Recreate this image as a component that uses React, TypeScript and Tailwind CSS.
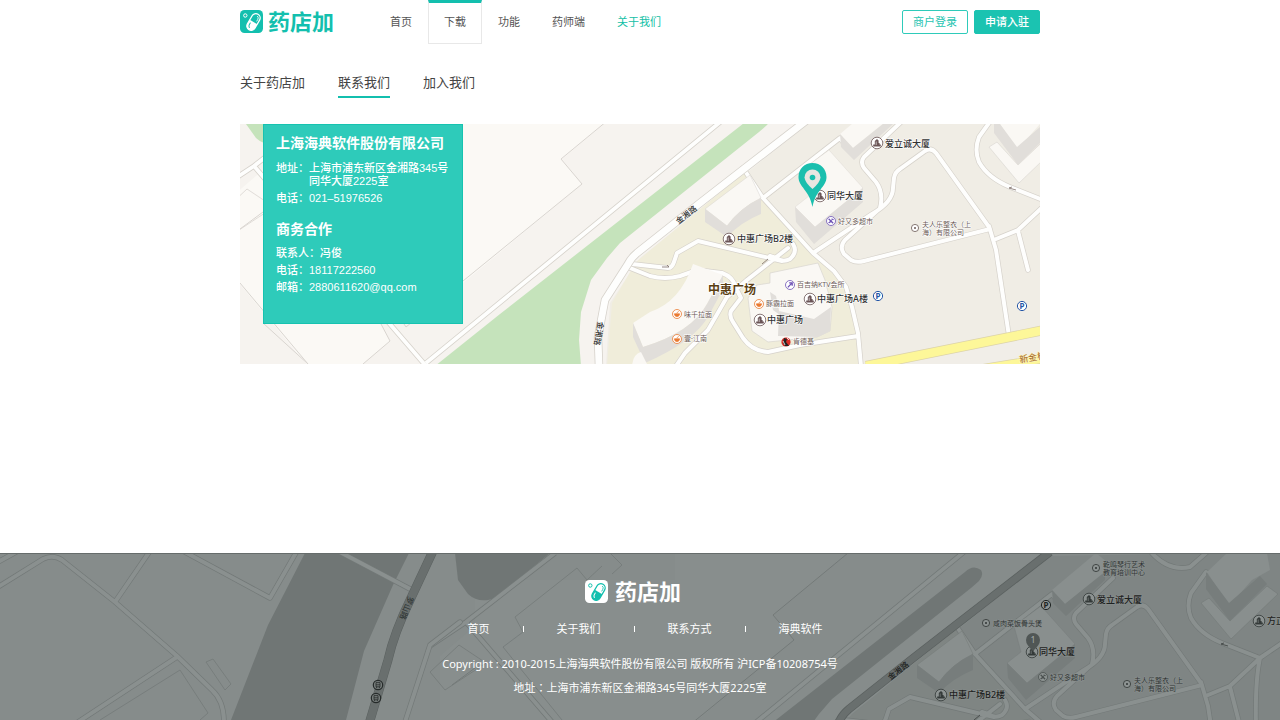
import React from "react";

type Palette = {
  base: string;
  parcel: string;
  line: string;
  green: string;
  district: string;
  plaza: string;
  road: string;
  edge: string;
  main: string;
  mainEdge: string;
  top: string;
  side: string;
  text: string;
  minor: string;
  halo: string;
  food: string;
  shop: string;
  tower: string;
  disc: string;
};

const light: Palette = {
  base: "#f6f3ef",
  parcel: "#fbf9f5",
  line: "#d9d5d0",
  green: "#c5e3bb",
  district: "#f0ede5",
  plaza: "#f0edda",
  road: "#fefefd",
  edge: "#d6d2cb",
  main: "#fefefd",
  mainEdge: "#d6d2cb",
  top: "#faf8f4",
  side: "#e1deda",
  text: "#333333",
  minor: "#6b5a55",
  halo: "#ffffff",
  food: "#ea7a30",
  shop: "#6d52b5",
  tower: "#6b5557",
  disc: "#ffffff",
};

const dark: Palette = {
  base: "#868c8b",
  parcel: "#888e8d",
  line: "#747a79",
  green: "#707675",
  district: "#7f8584",
  plaza: "#7f8583",
  road: "#8a908f",
  edge: "#737978",
  main: "#696f6e",
  mainEdge: "#5b6160",
  top: "#898f8e",
  side: "#777d7c",
  text: "#1e2221",
  minor: "#303534",
  halo: "#8a908f",
  food: "#4a504f",
  shop: "#4a504f",
  tower: "#343a39",
  disc: "#8d9392",
};

const mapFont = "'Noto Sans', 'Noto Sans CJK SC', sans-serif";

const minorRoads = [
  "M743 168L763 198L813 253L834 271L846 287L852 307L858 333L861 366",
  "M763 198L840 138L846 146",
  "M632 264L668 268Q672 268 674 262L677 253L698 241L782 261",
  "M630 268L650 276Q665 280 680 276L697 270L722 273Q733 277 735 286L741 298L731 311Q729 316 733 322L743 338Q752 351 768 352L800 345L858 336",
  "M676 366L685 353L708 330L727 297L747 280L788 248",
  "M793 244Q798 252 790 259Q783 263 776 258L770 256",
  "M813 253L872 214Q893 202 893 188L894 178Q895 172 900 169L925 151Q931 147 936 153L989 227",
  "M901 122L884 138L864 157Q860 162 864 168L876 182Q884 193 880 208",
  "M878 210L845 240Q839 247 844 254L851 260Q856 263 864 261L990 229",
  "M989 226L996 250L1009 336",
  "M996 239L1018 230L1048 202L1070 187",
  "M1018 231L1028 270",
  "M1048 202Q1043 225 1044 270",
  "M994 116L979 137Q974 150 979 162Q988 178 1010 187L1048 202",
  "M938 95Q956 116 978 111L994 97",
];

function Roads({ p, items, width }: { p: Palette; items: string[]; width: number }) {
  const d = items.join("");
  return (
    <g fill="none" strokeLinejoin="round" strokeLinecap="round">
      <path d={d} stroke={p.edge} strokeWidth={width + 1.4} />
      <path d={d} stroke={p.road} strokeWidth={width} />
    </g>
  );
}

function Terrain({ p }: { p: Palette }) {
  const mainRoad = "M599 366L598 337L605 300L628 264Q631 258 637 253L700 203L745 168L838 96";
  return (
    <g>
      <path d="M463 124L263 124L263 170L228 200L228 270L308 366L363 364L390 341L381 324L463 283L582 184L562 159L636 97L463 97Z" fill={p.parcel} />
      <path d="M636 97L561 159L582 184L463 281L406 327L400 318M240 283L308 364M263 323L308 364M363 364L390 341L381 324M240 229L263 212" fill="none" stroke={p.line} />
      <path d="M303 161L365 112L375 124L390 110M303 161L311 176L291 191L350 264M398 97L410 109L400 118M218 216L247 189L274 207L233 234Z" fill="none" stroke={p.line} strokeWidth="0.8" />
      <path d="M243 97L338 97L285 141Q268 149 256 138L246 124Z" fill={p.green} />
      <path d="M753 116Q761 108 769 114Q772 119 767 125L759 132L620 243L607 258L591 280L581 312L579 340L581 366L435 366L500 314Z" fill={p.green} />
      <path d="M838 100L640 258L632 270L610 303L606 366L1070 366L1070 96Z" fill={p.district} />
      <path d="M745 172L636 262L612 303L607 366L861 366L856 323L846 287L813 253L763 198Z" fill={p.plaza} />
      <g fill="none" strokeLinejoin="round">
        <path d="M752 96L426 363M218 190L254 166L343 97M254 166L426 366" stroke={p.edge} strokeWidth="5.4" />
        <path d="M752 96L426 363M218 190L254 166L343 97M254 166L426 366" stroke={p.road} strokeWidth="3.8" />
      </g>
      <Roads p={p} items={minorRoads} width={4} />
      <path d={mainRoad} fill="none" stroke={p.mainEdge} strokeWidth="8.4" />
      <path d={mainRoad} fill="none" stroke={p.main} strokeWidth="6.8" />

      <path d="M705 209L750 175L761 198Q740 208 727 226Z" fill={p.top} stroke={p.line} strokeWidth="0.5" />
      <path d="M705 209L727 226Q740 208 761 198V214Q741 222 727 237L705 222Z" fill={p.side} />
      <path d="M795 207L809 196L802 170L829 150L863 188L815 227Z" fill={p.top} stroke={p.line} strokeWidth="0.4" />
      <path d="M795 207L815 227L863 188V202L814 244L796 222Z" fill={p.side} />
      <path d="M840 134L884 97L900 110L853 148Z" fill={p.top} />
      <path d="M840 134L853 148L893 116V124L854 160L841 147Z" fill={p.side} />
      <path d="M995 116L1015 97L1055 97L1058 114L1040 124L1017 150Z" fill={p.top} />
      <path d="M994 116L1017 147L1048 120L1055 128L1018 165L994 133Z" fill={p.side} />
      <path d="M989 147L997 142L1018 165L1055 130L1066 138L1019 183Z" fill={p.top} stroke={p.line} strokeWidth="0.6" />
      <path d="M693 264L723 275L707 304Q692 332 643 347L633 323L650 312Q680 302 693 264Z" fill={p.top} />
      <path d="M633 323L643 347Q692 332 707 304L723 275V289L708 317Q693 342 645 363L633 337Z" fill={p.side} />
      <path d="M632 366Q633 354 641 352L648 366Z" fill={p.top} />
      <path d="M770 273L818 263L825 280L832 307L830 331L817 337L768 342L752 331L748 298L757 285L770 283Z" fill={p.top} stroke={p.line} strokeWidth="0.7" />
      <path d="M779 311L814 319L831 307L830 331L818 337L778 336ZM770 292L776 296L780 315L773 310Z" fill={p.side} />
    </g>
  );
}

function Tower({ x, y, p }: { x: number; y: number; p: Palette }) {
  return (
    <g transform={`translate(${x} ${y})`}>
      <circle r="5.8" fill={p.disc} stroke={p.tower} strokeWidth="0.8" />
      <path d="M-3.8 3.4V1.4H-2.2V-2L0 -4L1.6 -2.6V0H2.6V1.4H3.8V3.4Z" fill={p.tower} />
      <path d="M-0.8 -1.5V2" stroke={p.disc} strokeWidth="0.6" />
    </g>
  );
}

function Spot({ x, y, p, kind }: { x: number; y: number; p: Palette; kind: "food" | "shop" | "note" | "dot" }) {
  const color = kind === "food" ? p.food : kind === "dot" ? p.minor : p.shop;
  return (
    <g transform={`translate(${x} ${y})`}>
      <circle r={kind === "dot" ? 3.6 : 4.5} fill={p.disc} stroke={color} strokeWidth="0.8" />
      {kind === "food" && <path d="M-2.6 -0.2H2.6Q2.4 2.6 0 2.6Q-2.4 2.6 -2.6 -0.2ZM-0.4 -1L1.8 -2.6" fill={color} stroke={color} strokeWidth="0.7" />}
      {kind === "shop" && <path d="M-2.4 -2.2L2.2 2.2M-2.4 2L1 -0.6M0.4 -2L2.6 -1.4" fill="none" stroke={color} strokeWidth="1.2" />}
      {kind === "note" && <path d="M-2.2 2.4L1.4 -1.4M-0.8 -2.2H2.2V0.8" fill="none" stroke={color} strokeWidth="1.3" />}
      {kind === "dot" && <circle r="1" fill={color} />}
    </g>
  );
}

function Parking({ x, y, color, disc }: { x: number; y: number; color: string; disc: string }) {
  return (
    <g transform={`translate(${x} ${y})`}>
      <circle r="4.6" fill={disc} stroke={color} />
      <text y="2.8" textAnchor="middle" fontSize="8" fontWeight="700" fill={color}>P</text>
    </g>
  );
}

function Label({ x, y, p, minor, children }: { x: number; y: number; p: Palette; minor?: boolean; children: string }) {
  return (
    <text
      x={x}
      y={y}
      fontSize={minor ? 7 : 9}
      fontWeight={minor ? 400 : 500}
      fill={minor ? p.minor : p.text}
      stroke={p.halo}
      strokeWidth="1.2"
      strokeLinejoin="round"
      paintOrder="stroke"
    >
      {children}
    </text>
  );
}

function Places({ p }: { p: Palette }) {
  return (
    <g>
      <Tower x={877} y={143} p={p} />
      <Label x={885} y={147} p={p}>爱立诚大厦</Label>
      <Tower x={820} y={196} p={p} />
      <Label x={827} y={199} p={p}>同华大厦</Label>
      <Spot x={831} y={221} p={p} kind="shop" />
      <Label x={838} y={224} p={p} minor>好又多超市</Label>
      <Spot x={915} y={228} p={p} kind="dot" />
      <Label x={922} y={227} p={p} minor>夫人乐整衣（上</Label>
      <Label x={922} y={235} p={p} minor>海）有限公司</Label>
      <Tower x={729} y={239} p={p} />
      <Label x={737} y={242} p={p}>中惠广场B2楼</Label>
      <g transform="translate(688 217) rotate(-38)">
        <text textAnchor="middle" fontSize="8" fontWeight="500" fill={p.text}>金湘路</text>
      </g>
      <path d="M662 267H669L667 265M762 264L768 259M1009 188L1016 190M1009 188L1012 187" fill="none" stroke={p.minor} strokeWidth="0.7" />
    </g>
  );
}

function ContactMap() {
  const p = light;
  return (
    <svg
      className="absolute inset-0 h-full w-full"
      viewBox="240 124 800 240"
      preserveAspectRatio="xMidYMid slice"
      role="img"
      aria-label="同华大厦地图"
      fontFamily={mapFont}
    >
      <rect x="240" y="124" width="800" height="240" fill={p.base} />
      <Terrain p={p} />
      <path d="M861 366L1040 326V367Z" fill="#f1eee8" />
      <path d="M866 366L1042 330.500" stroke="#dcd3a8" strokeWidth="10" />
      <path d="M866 366L1042 330.500" stroke="#fdf799" strokeWidth="8.600" />
      <path d="M980 369L1042 359" stroke="#dcd3a8" strokeWidth="9" />
      <path d="M980 369L1042 359" stroke="#fdf799" strokeWidth="7.600" />
      <Places p={p} />
      <g transform="translate(596 333) rotate(99)">
        <text textAnchor="middle" fontSize="8" fontWeight="500" fill={p.text}>金湘路</text>
      </g>
      <text x="708" y="294" fontSize="12" fontWeight="700" fill="#5a3e12" stroke="#fff" strokeWidth="1.6" paintOrder="stroke">中惠广场</text>
      <Spot x={790} y={285} p={p} kind="note" />
      <Label x={797} y={287} p={p} minor>百吉纳KTV会所</Label>
      <Tower x={810} y={299} p={p} />
      <Label x={817} y={302} p={p}>中惠广场A楼</Label>
      <Spot x={759} y={304} p={p} kind="food" />
      <Label x={766} y={306} p={p} minor>豚霸拉面</Label>
      <Tower x={760} y={320} p={p} />
      <Label x={767} y={323} p={p}>中惠广场</Label>
      <Spot x={677} y={314} p={p} kind="food" />
      <Label x={684} y={317} p={p} minor>味千拉面</Label>
      <Spot x={677} y={339} p={p} kind="food" />
      <Label x={684} y={341} p={p} minor>壹·江南</Label>
      <circle cx="786" cy="342" r="4.600" fill="#d92d27" />
      <path d="M784 338L787 339L786 342L789 346H785L783 343Z" fill="#222" />
      <path d="M787 338L789 340M783 341L785 345" stroke="#fff" strokeWidth="0.8" />
      <Label x={793} y={344} p={p} minor>肯德基</Label>
      <Parking x={878} y={296} color="#2456a6" disc="#fff" />
      <Parking x={1022} y={306} color="#2456a6" disc="#fff" />
      <text transform="translate(1020 363) rotate(-10)" fontSize="9" fill="#a3621d" stroke="#fff8c0" strokeWidth="1" paintOrder="stroke">新金桥</text>
      <path
        fill="#1bbfae"
        d="M812.500 163C820.500 163 826.500 169 826.500 177C826.500 187 815.500 190 812.500 207C809.500 190 798.500 187 798.500 177C798.500 169 804.500 163 812.500 163Z"
      />
      <path d="M812.500 169.500A8 8 0 0 0 804.500 177.500Q805 182.500 812.500 189Q820 182.500 820.500 177.500A8 8 0 0 0 812.500 169.500Z" fill="#e9e6e1" />
      <circle cx="812.500" cy="177.500" r="2.800" fill="#1bbfae" />
    </svg>
  );
}

function Transit({ x, y }: { x: number; y: number }) {
  return (
    <g transform={`translate(${x} ${y})`} fill="none" stroke="#262b2a">
      <circle r="4.700" fill="#767c7b" strokeWidth="1.200" />
      <path d="M-2 -2.400H2V1.800H-2ZM-2 -0.200H2M-1.400 1.800V3M1.400 1.800V3" strokeWidth="0.800" />
    </g>
  );
}

function FooterMap() {
  const p = dark;
  return (
    <svg
      className="absolute inset-0 h-full w-full"
      viewBox="0 554 1280 166"
      preserveAspectRatio="xMidYMid slice"
      aria-hidden="true"
      fontFamily={mapFont}
    >
      <rect y="550" width="1280" height="170" fill={p.base} />
      <g transform="translate(212 456)">
        <Terrain p={p} />
      </g>
      <path d="M305 553H409L393 585L364 651L346 720H231L268 625Z" fill={p.green} />
      <Roads
        p={p}
        width={4}
        items={[
          "M-2 587L43 559Q53 554 62 560L115 602L177 656L212 690Q224 701 224 722",
          "M115 602L150 551",
          "M183 551L270 598L297 551",
          "M177 657L78 722",
          "M-2 562L18 551",
          "M338 551L412 590",
          "M460 622L430 645L405 722",
        ]}
      />
      <path d="M100 720L180 670L208 713L200 720M206 662L213 659L231 684L225 690Z" fill="none" stroke={p.line} strokeWidth="0.800" />
      <path d="M433 551L411 598Q394 633 388 660L369 724" fill="none" stroke={p.mainEdge} strokeWidth="9" />
      <path d="M433 551L411 598Q394 633 388 660L369 724" fill="none" stroke={p.main} strokeWidth="8" />
      <g transform="translate(404 607) rotate(112)">
        <text textAnchor="middle" fontSize="8" fontWeight="500" fill="#333938">罗山路</text>
      </g>
      <Transit x={378} y={685} />
      <Transit x={376} y={698} />
      <g transform="translate(212 456)">
        <Places p={p} />
      </g>
      <Spot x={1096} y={568} p={p} kind="dot" />
      <Label x={1103} y={567} p={p} minor>乾鸣琴行艺术</Label>
      <Label x={1103} y={575} p={p} minor>教育培训中心</Label>
      <Spot x={986} y={623} p={p} kind="dot" />
      <Label x={993} y={626} p={p} minor>咸肉菜饭骨头煲</Label>
      <Parking x={1046} y={605} color="#202524" disc="#8d9392" />
      <Tower x={1259} y={621} p={p} />
      <Label x={1267} y={624} p={p}>方正</Label>
      <path d="M1033 633A7 7 0 0 1 1040 640Q1040 645 1033 651Q1026 645 1026 640A7 7 0 0 1 1033 633Z" fill="#505655" />
      <text x="1033" y="643" fontSize="9" textAnchor="middle" fill="#a5abaa">1</text>
    </svg>
  );
}

function LogoMark({ tile, ink }: { tile: string; ink: string }) {
  return (
    <svg className="size-[23px]" viewBox="0 0 23 23" aria-hidden="true">
      <rect width="23" height="23" rx="4.500" fill={tile} />
      <circle cx="5.300" cy="5.500" r="1.700" fill="none" stroke={ink} strokeWidth="1" />
      <g transform="rotate(30 13.500 12)">
        <rect x="9.200" y="3" width="8.600" height="18" rx="4.300" fill="none" stroke={ink} strokeWidth="1.300" />
        <path d="M9.200 12H17.800V16.700A4.300 4.300 0 0 1 9.200 16.700Z" fill={ink} />
        <path d="M11.200 14.500V16.500Q11.300 18 12.600 18.800" fill="none" stroke={tile} strokeWidth="1" strokeLinecap="round" />
        <path d="M14.200 5Q15.900 5.400 15.900 7.500V9.500" fill="none" stroke={ink} strokeWidth="0.800" strokeLinecap="round" />
      </g>
    </svg>
  );
}

const navItems = ["首页", "下载", "功能", "药师端", "关于我们"];
const footerLinks = ["首页", "关于我们", "联系方式", "海典软件"];

function navClass(item: string) {
  if (item === "下载") return "border border-t-[3px] border-[#e8e8e8] border-t-[#13bfae] px-[15px] text-[#555]";
  if (item === "关于我们") return "border-y border-t-[3px] border-transparent px-4 text-[#13bfa6]";
  return "border-y border-t-[3px] border-transparent px-4 text-[#555]";
}

export default function App() {
  return (
    <div className="flex min-h-screen flex-col bg-white font-['Noto_Sans','Noto_Sans_CJK_SC',sans-serif] text-[11px]">
      <header className="mx-auto flex w-full max-w-[800px] items-start">
        <a href="#home" className="flex h-[43px] items-center gap-[5px] text-[22px] font-bold text-[#13bfae]">
          <LogoMark tile="#13bfae" ink="#ffffff" />
          药店加
        </a>
        <nav className="ml-10 flex">
          {navItems.map((item) => (
            <a key={item} href={`#${item}`} className={`flex h-11 items-center pb-px ${navClass(item)}`}>
              {item}
            </a>
          ))}
        </nav>
        <div className="ml-auto flex gap-1.5 pt-2.5">
          <button className="h-6 rounded-xs border border-[#2ecbba] px-2.5 text-[#1fc4b1]">商户登录</button>
          <button className="h-6 rounded-xs border border-[#1bc3b1] bg-[#1bc3b1] px-2.5 font-medium text-white">申请入驻</button>
        </div>
      </header>

      <main className="mx-auto w-full max-w-[800px] pb-10">
        <nav className="mt-7 flex gap-[33px] text-[13px] leading-5 text-[#444]">
          <a href="#about" className="border-b-2 border-transparent pb-1">关于药店加</a>
          <a href="#contact" aria-current="page" className="border-b-2 border-[#13bfae] pb-1">联系我们</a>
          <a href="#join" className="border-b-2 border-transparent pb-1">加入我们</a>
        </nav>

        <section className="relative mt-[26px] h-60 overflow-hidden">
          <ContactMap />
          <div className="relative ml-[23px] h-[200px] w-[200px] border border-[#16c3b0] bg-[#2ecbba] px-3 pt-[7px] font-['Liberation_Sans','Noto_Sans_CJK_SC',sans-serif] font-medium text-white">
            <h2 className="text-[14px] leading-[22px] font-bold whitespace-nowrap">上海海典软件股份有限公司</h2>
            <div className="mt-2 flex leading-[13px] whitespace-nowrap">
              <span>地址：</span>
              <p>
                上海市浦东新区金湘路345号
                <br />
                同华大厦2225室
              </p>
            </div>
            <p className="mt-[2px] leading-[17px]">电话：021–51976526</p>
            <h2 className="mt-[11px] text-[14px] leading-[22px] font-bold">商务合作</h2>
            <div className="mt-[5px] leading-[17px]">
              <p>联系人：冯俊</p>
              <p>电话：18117222560</p>
              <p>邮箱：2880611620@qq.com</p>
            </div>
          </div>
        </section>
      </main>

      <footer className="relative mt-auto overflow-hidden border-t border-[#666c6b] text-white">
        <FooterMap />
        <div className="relative flex flex-col items-center pb-[22px]">
          <a href="#home" className="mt-[25px] flex h-6 items-center gap-[7px] pr-3.5 text-[22px] font-bold">
            <LogoMark tile="#ffffff" ink="#13bfae" />
            药店加
          </a>
          <nav className="mt-4 flex items-center gap-[33px] pl-2.5 leading-5">
            {footerLinks.map((item, i) => (
              <React.Fragment key={item}>
                {i > 0 && <span className="h-1.5 w-px bg-white" />}
                <a href={`#${item}`}>{item}</a>
              </React.Fragment>
            ))}
          </nav>
          <p className="mt-[15px] leading-5">Copyright : 2010-2015上海海典软件股份有限公司 版权所有 沪ICP备10208754号</p>
          <p className="mt-1 font-['Noto_Sans','Noto_Sans_CJK_TC',sans-serif] leading-5">
            地址：上海市浦东新区金湘路345号同华大厦2225室
          </p>
        </div>
      </footer>
    </div>
  );
}
